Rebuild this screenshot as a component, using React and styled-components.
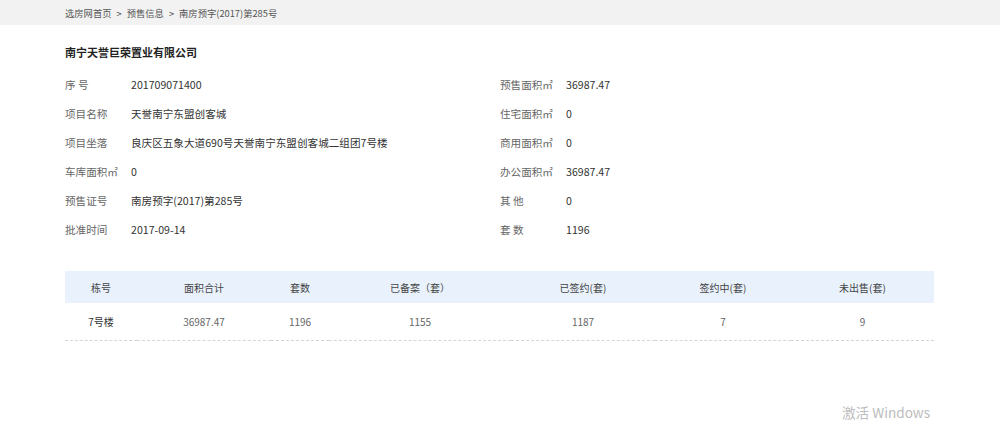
import styled, { createGlobalStyle } from "styled-components";

const GlobalStyle = createGlobalStyle`
  html, body {
    margin: 0;
    padding: 0;
    background: #ffffff;
    font-family: "Noto Sans CJK SC", "Liberation Sans", sans-serif;
  }
`;

const Page = styled.div`
  position: relative;
  width: 1000px;
  height: 424px;
  overflow: hidden;
`;

const Crumbs = styled.div`
  height: 25px;
  background: #f2f2f2;
  display: flex;
  align-items: center;
  gap: 5px;
  padding-left: 65px;
  font-size: 9.3px;
  color: #555;
`;

const Main = styled.div`
  padding: 0 66px 0 65px;
`;

const Company = styled.h1`
  margin: 16px 0 7px;
  font-size: 11px;
  font-weight: bold;
  color: #222;
  line-height: 22px;
`;

const InfoGrid = styled.div`
  display: grid;
  grid-template-columns: 435px 1fr;
  grid-auto-rows: 29px;
`;

const Field = styled.div`
  display: flex;
  align-items: center;
  font-size: 10.6px;
`;

const Label = styled.span`
  width: 66px;
  color: #666;
`;

const Value = styled.span`
  color: #333;
`;

const Table = styled.table`
  margin-top: 27px;
  width: 869px;
  border-collapse: collapse;
  table-layout: fixed;
  font-size: 10px;
`;

const Th = styled.th`
  height: 32px;
  background: #e9f2fc;
  font-weight: normal;
  color: #444;
  text-align: center;
  padding: 0;
`;

const Td = styled.td`
  height: 37px;
  color: ${(p) => (p.$first ? "#333" : "#666")};
  text-align: center;
  padding: 0;
  border-bottom: 1px dashed #d6d6d6;
`;

const Watermark = styled.div`
  position: absolute;
  left: 842px;
  top: 402px;
  font-size: 13.6px;
  color: #bdbdbd;
`;

const left = [
  ["序 号", "201709071400"],
  ["项目名称", "天誉南宁东盟创客城"],
  ["项目坐落", "良庆区五象大道690号天誉南宁东盟创客城二组团7号楼"],
  ["车库面积㎡", "0"],
  ["预售证号", "南房预字(2017)第285号"],
  ["批准时间", "2017-09-14"],
];

const right = [
  ["预售面积㎡", "36987.47"],
  ["住宅面积㎡", "0"],
  ["商用面积㎡", "0"],
  ["办公面积㎡", "36987.47"],
  ["其 他", "0"],
  ["套 数", "1196"],
];

const cols = [
  ["栋号", 72],
  ["面积合计", 134],
  ["套数", 58],
  ["已备案（套）", 182],
  ["已签约(套)", 144],
  ["签约中(套)", 136],
  ["未出售(套)", 143],
];

const row = ["7号楼", "36987.47", "1196", "1155", "1187", "7", "9"];

export default function App() {
  return (
    <Page>
      <GlobalStyle />
      <Crumbs>
        <span>选房网首页</span>
        <span>&gt;</span>
        <span>预售信息</span>
        <span>&gt;</span>
        <span>南房预字(2017)第285号</span>
      </Crumbs>
      <Main>
        <Company>南宁天誉巨荣置业有限公司</Company>
        <InfoGrid>
          {left.map((l, i) => [
            <Field key={"l" + i}>
              <Label>{l[0]}</Label>
              <Value>{l[1]}</Value>
            </Field>,
            <Field key={"r" + i}>
              <Label>{right[i][0]}</Label>
              <Value>{right[i][1]}</Value>
            </Field>,
          ])}
        </InfoGrid>
        <Table>
          <colgroup>
            {cols.map((c) => (
              <col key={c[0]} style={{ width: c[1] }} />
            ))}
          </colgroup>
          <thead>
            <tr>
              {cols.map((c) => (
                <Th key={c[0]}>{c[0]}</Th>
              ))}
            </tr>
          </thead>
          <tbody>
            <tr>
              {row.map((v, i) => (
                <Td key={i} $first={i === 0}>
                  {v}
                </Td>
              ))}
            </tr>
          </tbody>
        </Table>
      </Main>
      <Watermark>激活 Windows</Watermark>
    </Page>
  );
}
